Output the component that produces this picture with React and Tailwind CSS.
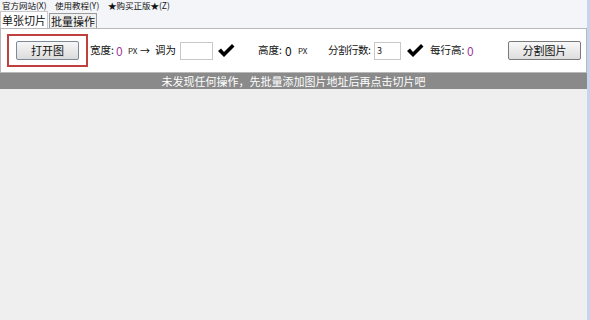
import React from "react";

const cjk = { fontFamily: '"Noto Sans CJK SC", "Noto Sans", sans-serif' };

function Check() {
  return (
    <svg width="18" height="15" viewBox="0 0 18 15" className="shrink-0">
      <path d="M1 8 L4 5.5 L7 9 L15 1 L17.5 3.5 L7 14 Z" fill="#000" />
    </svg>
  );
}

export default function App() {
  return (
    <div className="flex h-[320px] w-[590px] overflow-hidden whitespace-nowrap bg-[#efefef] text-[#111]" style={cjk}>
      <div className="flex min-w-0 flex-1 flex-col">
        {/* menu bar */}
        <div className="flex h-[11px] items-center bg-[#f3f5f8] text-[8.5px] leading-none">
          <span className="ml-[2px] w-[53px]">官方网站(X)</span>
          <span className="w-[53px]">使用教程(Y)</span>
          <span>★购买正版★(Z)</span>
        </div>

        {/* tabs */}
        <div className="flex h-[17px] items-end bg-[#f3f5f8] text-[11px] leading-none">
          <div className="flex h-[17px] w-[48px] items-center justify-center border-x border-t border-[#c8c8c8] bg-white">
            单张切片
          </div>
          <div className="ml-[1px] flex h-[15px] w-[48px] items-center justify-center border-x border-t border-[#9a9a9a] bg-[#f0f0f0]">
            批量操作
          </div>
        </div>

        {/* tool panel */}
        <div className="flex h-[45px] items-center border border-[#b8b8b8] bg-white text-[10.5px] leading-none">
          <div className="ml-[6px] flex h-[33px] w-[81px] shrink-0 items-center justify-center border-2 border-[#c0403f]">
            <button className="h-[19px] w-[63px] rounded-[2px] border border-[#7a8a99] bg-gradient-to-b from-[#f6f6f6] to-[#dcdcdc] text-[11px]">
              打开图
            </button>
          </div>
          <span className="ml-[2px] w-[26px] shrink-0">宽度:</span>
          <span className="w-[12px] shrink-0 text-[12px] text-[#a03c9c]">0</span>
          <span className="w-[11px] shrink-0 text-[8px]">PX</span>
          <span className="ml-[1px] w-[15px] shrink-0 text-[10px]">→</span>
          <span className="w-[25px] shrink-0">调为</span>
          <div className="h-[18px] w-[33px] shrink-0 border border-[#c8c8c8] bg-white" />
          <div className="ml-[4px] w-[41px] shrink-0">
            <Check />
          </div>
          <span className="w-[27px] shrink-0">高度:</span>
          <span className="w-[13px] shrink-0 text-[12px]">0</span>
          <span className="w-[30px] shrink-0 text-[8px]">PX</span>
          <span className="w-[46px] shrink-0 tracking-[-0.5px]">分割行数:</span>
          <div className="flex h-[18px] w-[27px] shrink-0 items-center border border-[#c8c8c8] bg-white pl-[2px] text-[9px]">
            3
          </div>
          <div className="ml-[5px] w-[24px] shrink-0">
            <Check />
          </div>
          <span className="w-[37px] shrink-0">每行高:</span>
          <span className="w-[41px] shrink-0 text-[12px] text-[#a03c9c]">0</span>
          <button className="h-[19px] w-[73px] shrink-0 rounded-[2px] border border-[#7a7a7a] bg-gradient-to-b from-[#f8f8f8] to-[#dedede] text-[11px]">
            分割图片
          </button>
        </div>

        {/* status bar */}
        <div className="flex h-[16px] items-center justify-center bg-[#8a8a8a] text-[11px] leading-none text-white">
          未发现任何操作，先批量添加图片地址后再点击切片吧
        </div>

        <div className="flex-1 bg-[#efefef]" />
      </div>
      <div className="w-[3px] shrink-0 bg-[#c4d6ee]" />
    </div>
  );
}
